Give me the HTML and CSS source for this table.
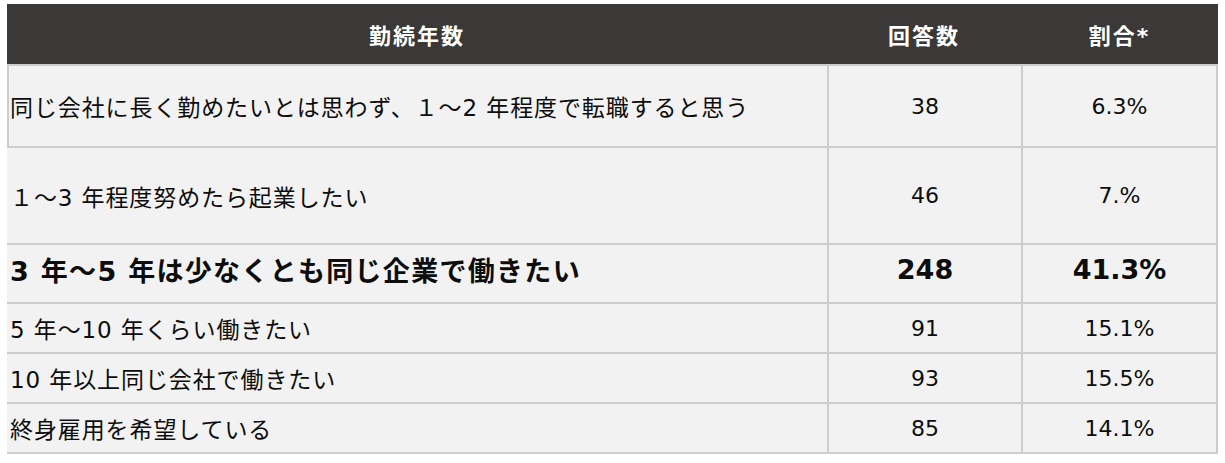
FILE: index.html
```html
<!DOCTYPE html>
<html lang="ja">
<head>
<meta charset="utf-8">
<title>勤続年数</title>
<link rel="stylesheet" href="styles.css">
</head>
<body>
<div class="table">
  <div class="th">勤続年数</div>
  <div class="th">回答数</div>
  <div class="th">割合*</div>

  <div class="td label first first-left">同じ会社に長く勤めたいとは思わず、１～2 年程度で転職すると思う</div>
  <div class="td num first">38</div>
  <div class="td num first last">6.3%</div>

  <div class="td label">１～3 年程度努めたら起業したい</div>
  <div class="td num">46</div>
  <div class="td num last">7.%</div>

  <div class="td label strong">3 年～5 年は少なくとも同じ企業で働きたい</div>
  <div class="td num strong">248</div>
  <div class="td num strong last">41.3%</div>

  <div class="td label">5 年～10 年くらい働きたい</div>
  <div class="td num">91</div>
  <div class="td num last">15.1%</div>

  <div class="td label">10 年以上同じ会社で働きたい</div>
  <div class="td num">93</div>
  <div class="td num last">15.5%</div>

  <div class="td label">終身雇用を希望している</div>
  <div class="td num">85</div>
  <div class="td num last">14.1%</div>
</div>
</body>
</html>
```
FILE: styles.css
```css
* { box-sizing: border-box; }
html, body { margin: 0; padding: 0; background: #ffffff; }
body {
  font-family: "DejaVu Sans", "Noto Sans CJK JP", sans-serif;
  color: #0d0d0d;
}
.table {
  display: grid;
  grid-template-columns: 820px 194px 197px;
  grid-template-rows: 60px 84px 97px 59px 50px 50px 50px;
  margin: 4px 0 0 7px;
  width: 1211px;
}
.th {
  background: #3a3937;
  color: #ffffff;
  font-weight: bold;
  font-size: 22px;
  letter-spacing: 2px;
  display: flex;
  align-items: center;
  justify-content: center;
}
.td {
  background: #f2f2f2;
  border-bottom: 2px solid #cdcdcd;
  display: flex;
  align-items: center;
  font-size: 23px;
  letter-spacing: 0.9px;
}
.td.first { border-top: 2px solid #cdcdcd; }
.td.first-left { border-left: 2px solid #cdcdcd; padding-left: 1px; }
.label { padding-left: 3px; }
.num {
  justify-content: center;
  border-left: 2px solid #cdcdcd;
  letter-spacing: 0;
  font-size: 22px;
}
.last { border-right: 2px solid #cdcdcd; }
.strong {
  font-weight: bold;
  font-size: 27px;
  letter-spacing: 1.3px;
  padding-bottom: 8px;
}
.num.strong { letter-spacing: 0; font-size: 27px; }
```
